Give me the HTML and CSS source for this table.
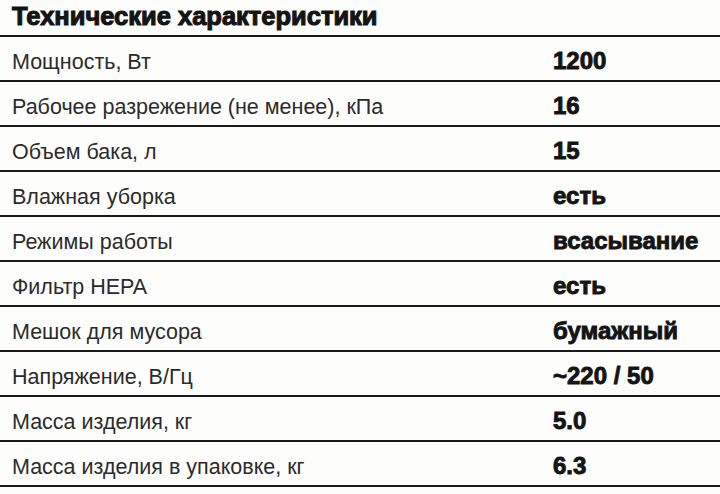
FILE: index.html
```html
<!DOCTYPE html>
<html lang="ru">
<head>
<meta charset="utf-8">
<title>Технические характеристики</title>
<link rel="stylesheet" href="styles.css">
</head>
<body>
<div class="sheet">
  <h1 class="title">Технические характеристики</h1>
  <div class="specs">
    <div class="row"><span class="label">Мощность, Вт</span><span class="value">1200</span></div>
    <div class="row"><span class="label">Рабочее разрежение (не менее), кПа</span><span class="value">16</span></div>
    <div class="row"><span class="label">Объем бака, л</span><span class="value">15</span></div>
    <div class="row"><span class="label">Влажная уборка</span><span class="value">есть</span></div>
    <div class="row"><span class="label">Режимы работы</span><span class="value">всасывание</span></div>
    <div class="row"><span class="label">Фильтр HEPA</span><span class="value">есть</span></div>
    <div class="row"><span class="label">Мешок для мусора</span><span class="value">бумажный</span></div>
    <div class="row"><span class="label">Напряжение, В/Гц</span><span class="value">~220 / 50</span></div>
    <div class="row"><span class="label">Масса изделия, кг</span><span class="value">5.0</span></div>
    <div class="row"><span class="label">Масса изделия в упаковке, кг</span><span class="value">6.3</span></div>
  </div>
</div>
</body>
</html>
```
FILE: styles.css
```css
html, body {
  margin: 0;
  padding: 0;
  background: #fdfdfc;
}
.sheet {
  width: 720px;
  height: 494px;
  overflow: hidden;
  color: #1c1c1c;
  font-family: "Liberation Sans", Arial, sans-serif;
}
.title {
  margin: 0;
  height: 37px;
  box-sizing: border-box;
  padding: 1px 0 0 12px;
  font-size: 25.5px;
  line-height: 30px;
  font-weight: 700;
  -webkit-text-stroke: 1.1px #141414;
  color: #141414;
  letter-spacing: 0;
  border-bottom: 2px solid #1a1a1a;
}
.specs {
  display: flex;
  flex-direction: column;
}
.row {
  display: grid;
  grid-template-columns: 541px 1fr;
  align-items: center;
  height: 45px;
  box-sizing: border-box;
  padding: 4px 0 0 12px;
  border-bottom: 2px solid #1a1a1a;
}
.label {
  font-size: 21.5px;
  font-weight: 400;
  color: #2b2b2b;
  position: relative;
  top: 2px;
}
.value {
  font-size: 24px;
  font-weight: 700;
  color: #141414;
  -webkit-text-stroke: 0.9px #141414;
}
```
